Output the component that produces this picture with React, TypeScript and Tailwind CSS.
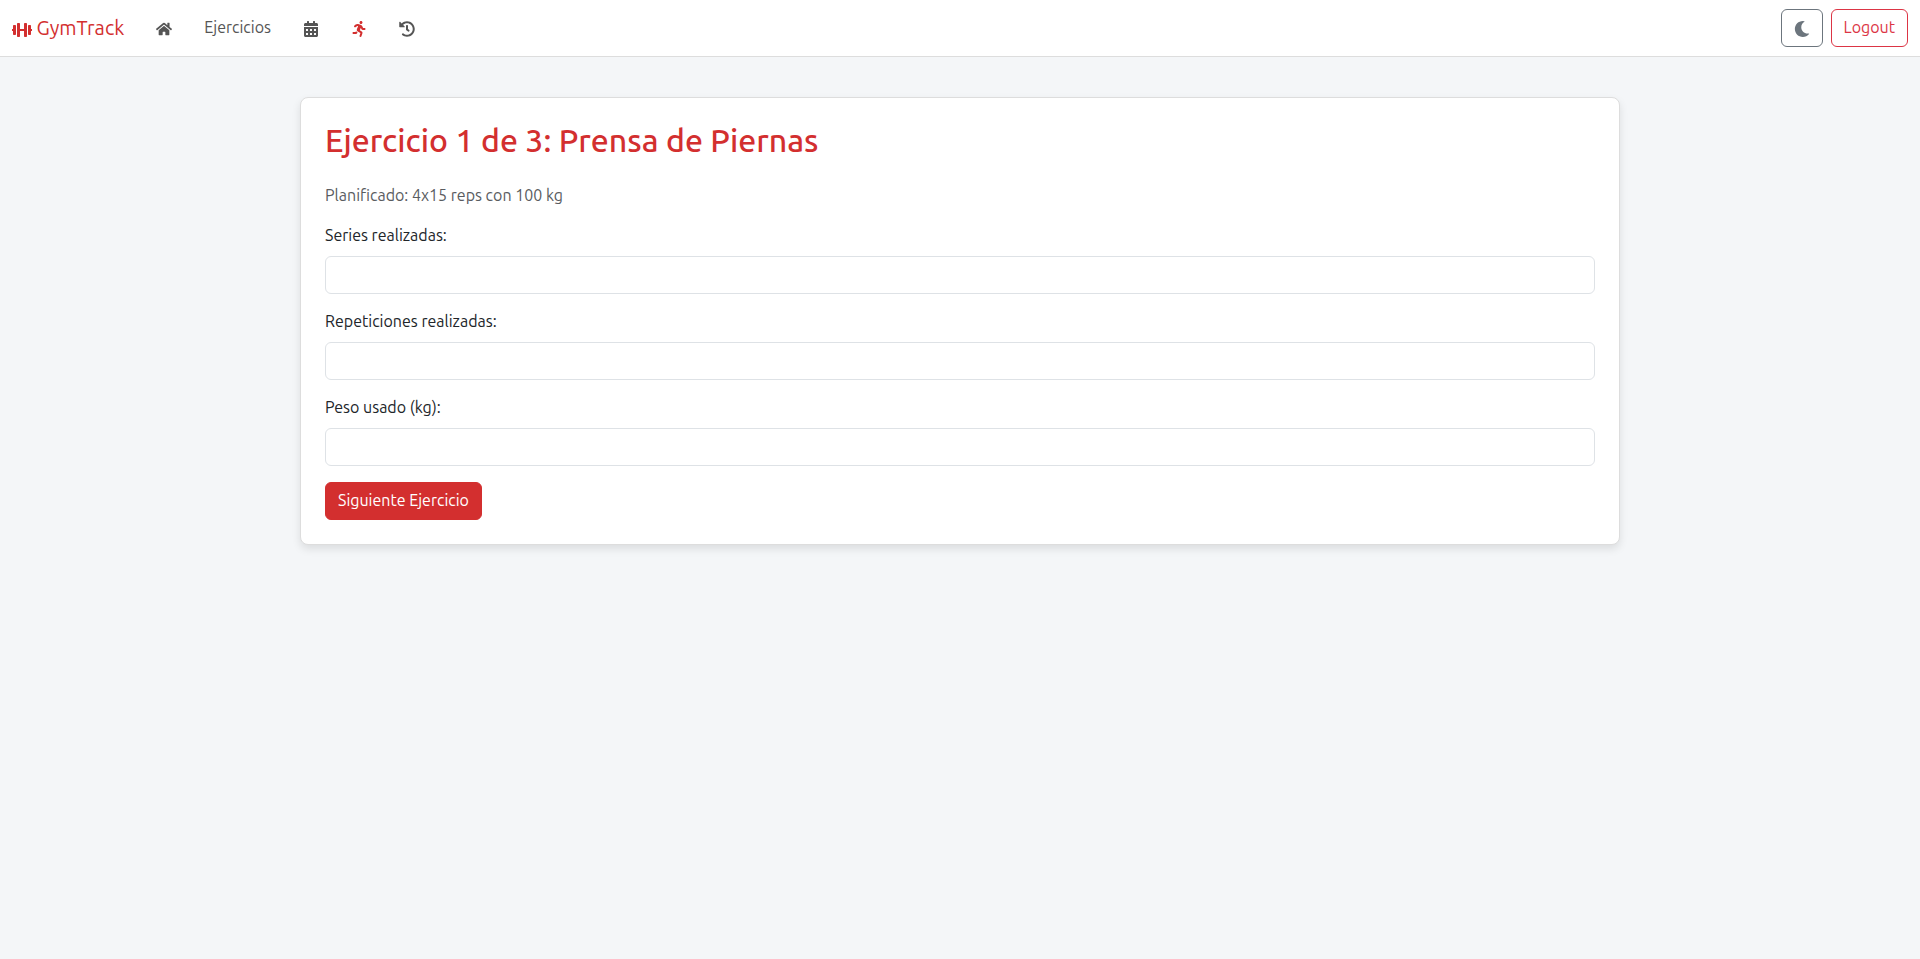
import { FaCalendarAlt, FaDumbbell, FaHistory, FaHome, FaMoon, FaRunning } from "react-icons/fa";

const links = [
  { label: "Inicio", icon: FaHome },
  { label: "Ejercicios" },
  { label: "Calendario", icon: FaCalendarAlt },
  { label: "Entrenar", icon: FaRunning, active: true },
  { label: "Historial", icon: FaHistory },
];

const fields = [
  { id: "series", label: "Series realizadas:" },
  { id: "repeticiones", label: "Repeticiones realizadas:" },
  { id: "peso", label: "Peso usado (kg):" },
];

function Navbar() {
  return (
    <nav className="flex flex-wrap items-center border-b border-[#dddddd] bg-white px-3 py-2">
      <a href="#" className="mr-4 py-1 text-xl leading-8 text-[#d32f2f]">
        <FaDumbbell className="inline h-4 w-5 align-[-3px]" /> GymTrack
      </a>
      <ul className="flex flex-wrap items-center text-base text-[#555555]">
        {links.map(({ label, icon: Icon, active }) => (
          <li key={label}>
            {Icon ? (
              <a
                href="#"
                aria-label={label}
                className={active ? "block px-4 py-2 text-[#d32f2f]" : "block px-4 py-2"}
              >
                <Icon className="inline size-4 align-[-3px]" />
              </a>
            ) : (
              <a href="#" className="block px-4 pt-2 pb-2.5 leading-[22px]">
                {label}
              </a>
            )}
          </li>
        ))}
      </ul>
      <div className="ml-auto flex items-center gap-2">
        <button
          type="button"
          aria-label="Modo oscuro"
          className="h-[38px] rounded-md border border-[#6c757d] px-3 text-[#6c757d]"
        >
          <FaMoon className="inline size-4 align-[-3px]" />
        </button>
        <a
          href="#"
          className="rounded-md border border-[#dc3545] px-3 pt-1.5 pb-2 leading-[22px] text-[#dc3545]"
        >
          Logout
        </a>
      </div>
    </nav>
  );
}

export default function App() {
  return (
    <div className="min-h-screen bg-[#f4f6f8] font-['Ubuntu','Noto_Sans',sans-serif] text-base text-[#212529]">
      <Navbar />
      <main className="mx-auto mt-10 max-w-[1320px]">
        <section className="rounded-lg border border-[#dddddd] bg-white p-6 shadow-[0_4px_8px_rgba(0,0,0,0.1)]">
          <h2 className="mb-[26px] text-[32px] leading-9 font-medium text-[#d32f2f]">
            Ejercicio 1 de 3: Prensa de Piernas
          </h2>
          <p className="mb-[18px] leading-[22px] text-[#595c5f]">Planificado: 4x15 reps con 100 kg</p>
          <form>
            {fields.map(({ id, label }) => (
              <div key={id} className="mb-4">
                <label htmlFor={id} className="mb-2.5 block leading-[22px]">
                  {label}
                </label>
                <input
                  id={id}
                  name={id}
                  type="text"
                  inputMode="numeric"
                  className="block h-[38px] w-full rounded-md border border-[#dee2e6] bg-white px-3"
                />
              </div>
            ))}
            <button
              type="submit"
              className="block rounded-md border border-[#d32f2f] bg-[#d32f2f] px-3 pt-1.5 pb-2 leading-[22px] text-white"
            >
              Siguiente Ejercicio
            </button>
          </form>
        </section>
      </main>
    </div>
  );
}
